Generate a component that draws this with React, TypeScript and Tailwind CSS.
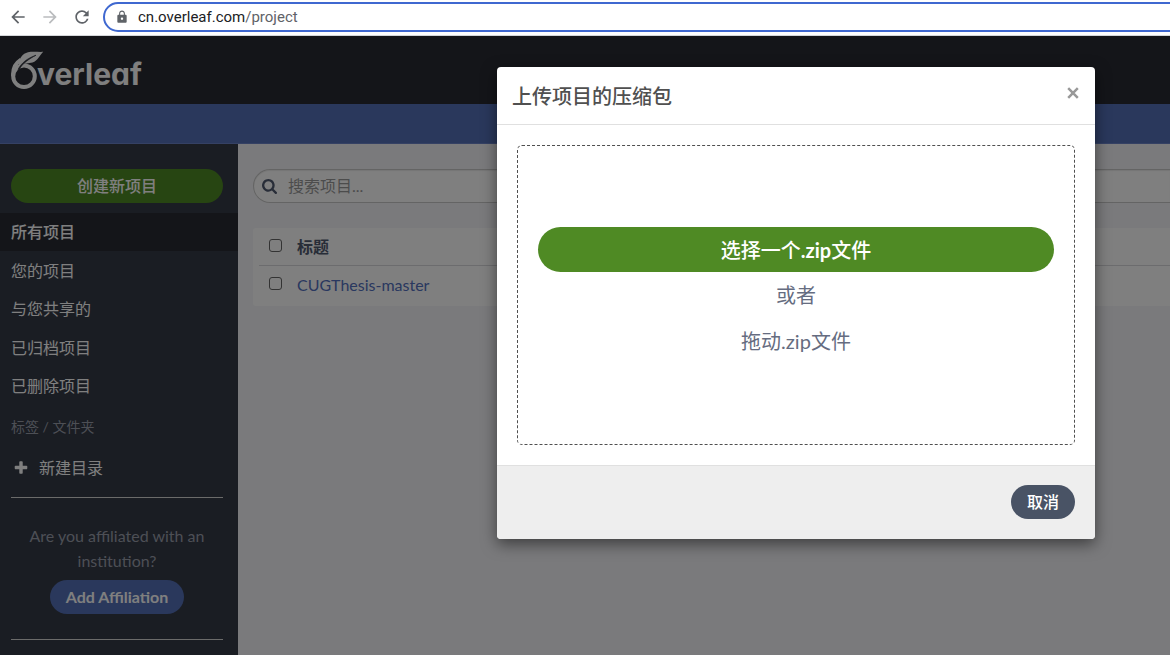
import type { ReactNode } from "react";
import { MdArrowBack, MdArrowForward, MdLock, MdRefresh } from "react-icons/md";

const filters = ["所有项目", "您的项目", "与您共享的", "已归档项目", "已删除项目"];

function Logo() {
  return (
    <a href="#" aria-label="Overleaf" className="flex h-[38px] text-white">
      <svg viewBox="0 0 33 38" className="h-[38px] w-[33px] shrink-0" aria-hidden="true">
        <circle cx="13" cy="25.2" r="10.8" fill="none" stroke="currentColor" strokeWidth="4" />
        <path d="M2.200 25C1.600 17.500 5 12 10 8.800" fill="none" stroke="currentColor" strokeWidth="4" />
        <path
          d="M8 13C8.200 7 11.500 2.600 17 1.200C22 0 27.500 1.200 32.200 .800C28.500 4.500 27 9.800 21.500 11.600C17.500 12.900 14 11.400 8 16Z"
          fill="currentColor"
        />
        <path d="M7 18.500C10 12.500 16 7.200 25 4.200C18 8 11.500 12.500 8.500 18Z" fill="#282c35" stroke="#282c35" strokeWidth="0.600" />
      </svg>
      <span className="-ml-[7px] pt-[5px] font-['Inter',sans-serif] text-[30px] leading-[36px] font-bold [font-feature-settings:'cv11'_1,'ss03'_1]">
        verleaf
      </span>
    </a>
  );
}

function SearchIcon() {
  return (
    <svg viewBox="0 128 1664 1664" className="size-[15px] shrink-0" fill="currentColor" aria-hidden="true">
      <path d="M1152 832q0-185-131.500-316.500t-316.500-131.500-316.500 131.500-131.500 316.500 131.500 316.500 316.500 131.500 316.500-131.500 131.500-316.500zm512 832q0 52-38 90t-90 38q-54 0-90-38l-343-342q-179 124-399 124-143 0-273.500-55.500t-225-150-150-225-55.500-273.500 55.500-273.500 150-225 225-150 273.500-55.500 273.500 55.500 225 150 150 225 55.500 273.500q0 220-124 399l343 343q37 37 37 90z" />
    </svg>
  );
}

function PlusIcon() {
  return (
    <svg viewBox="0 0 1792 1792" className="size-4 shrink-0" fill="currentColor" aria-hidden="true">
      <path d="M1600 736v192q0 40-28 68t-68 28h-416v416q0 40-28 68t-68 28h-192q-40 0-68-28t-28-68v-416h-416q-40 0-68-28t-28-68v-192q0-40 28-68t68-28h416v-416q0-40 28-68t68-28h192q40 0 68 28t28 68v416h416q40 0 68 28t28 68z" />
    </svg>
  );
}

function BrowserBar() {
  return (
    <div className="flex h-9 items-center overflow-hidden border-b border-[#d5d7da] bg-white pb-[2px] pl-2 font-[Roboto,sans-serif] text-[#5f6368]">
      <button type="button" aria-label="Back" className="mr-3 shrink-0">
        <MdArrowBack size={20} />
      </button>
      <button type="button" aria-label="Forward" className="mr-3 shrink-0 text-[#babcbe]">
        <MdArrowForward size={20} />
      </button>
      <button type="button" aria-label="Reload" className="mr-[11px] shrink-0">
        <MdRefresh size={20} />
      </button>
      <div className="-mr-5 flex h-[30px] grow items-center rounded-full border-2 border-[#3f68d0] pl-[10px] text-[15px] leading-5">
        <MdLock size={14} className="mr-[9px]" />
        <span className="text-[#202124]">cn.overleaf.com</span>
        <span>/project</span>
      </div>
    </div>
  );
}

function Sidebar() {
  return (
    <aside className="w-[238px] shrink-0 bg-[#343a47] pt-[25px] text-white">
      <div className="pr-[15px] pl-[11px]">
        <button type="button" className="h-[34px] w-full rounded-full bg-[#4f8a24] font-medium">
          创建新项目
        </button>
      </div>
      <ul className="mt-[10px] flex h-48 flex-col justify-between">
        {filters.map((name, i) => (
          <li key={name}>
            <a
              href="#"
              className={
                i === 0
                  ? "flex h-[38px] items-center bg-[#282b33] pl-[11px] font-medium"
                  : "flex h-[38px] items-center pl-[11px]"
              }
            >
              {name}
            </a>
          </li>
        ))}
      </ul>
      <h2 className="mt-3 pl-[11px] text-[14px] leading-5 text-[#9a9fab]">标签 / 文件夹</h2>
      <button type="button" className="mt-[18px] flex items-center gap-[10px] pl-[13px] leading-[26px]">
        <PlusIcon />
        新建目录
      </button>
      <div className="mt-4 mr-[15px] ml-[11px] border-y border-[#e8e9e4]/90 pt-[25px] pb-[25px] text-center">
        <p className="leading-[25px] text-[#9a9fab]">Are you affiliated with an institution?</p>
        <button type="button" className="mt-[7px] h-[34px] rounded-full bg-[#5470b8] px-4 font-bold">
          Add Affiliation
        </button>
      </div>
    </aside>
  );
}

function Row({ label, children, head }: { label: string; children: ReactNode; head?: boolean }) {
  const Cell = head ? "th" : "td";
  return (
    <tr className={head ? "h-[37px] border-b border-[#d8d9dc]" : "h-[38px]"}>
      <Cell className="w-[38px] pl-[10px] text-left align-middle">
        <input
          type="checkbox"
          aria-label={label}
          className="mb-[2px] block size-[13px] appearance-none rounded-[3px] border border-[#666] bg-white"
        />
      </Cell>
      <Cell className="text-left align-middle leading-[25px]">{children}</Cell>
    </tr>
  );
}

function ProjectList() {
  return (
    <main className="min-w-0 grow bg-[#f4f5f8] pt-[25px] pl-[15px] text-[#505a70]">
      <label className="flex h-[34px] items-center gap-[11px] rounded-l-full border border-r-0 border-[#c8c8c8] bg-white pl-2 shadow-[inset_0_1px_1px_rgba(0,0,0,0.08)]">
        <SearchIcon />
        <input
          type="text"
          aria-label="搜索项目"
          placeholder="搜索项目..."
          className="min-w-0 grow bg-transparent outline-none placeholder:text-[#999]"
        />
      </label>
      <div className="mt-[25px] rounded-l-[3px] bg-white pb-[3px] pl-[6px]">
        <table className="w-full border-collapse">
          <thead>
            <Row head label="选择全部">
              <span className="font-bold">标题</span>
            </Row>
          </thead>
          <tbody>
            <Row label="选择 CUGThesis-master">
              <a href="#" className="text-[#5370c0]">
                CUGThesis-master
              </a>
            </Row>
          </tbody>
        </table>
      </div>
    </main>
  );
}

function UploadDialog() {
  return (
    <section
      role="dialog"
      aria-labelledby="upload-title"
      className="w-[598px] overflow-hidden rounded-[4px] bg-white shadow-[0_5px_15px_rgba(0,0,0,0.5)]"
    >
      <header className="flex h-[58px] items-center justify-between border-b border-[#e0e0e0] pr-[15px] pl-[15px]">
        <h1 id="upload-title" className="text-[20px] leading-[26px] font-medium text-[#505050]">
          上传项目的压缩包
        </h1>
        <button type="button" aria-label="关闭" className="mb-[6px] text-[#999]">
          <svg viewBox="0 0 14 14" className="size-[14px]" aria-hidden="true">
            <path d="M2.200 2.200L11.800 11.800M11.800 2.200L2.200 11.800" stroke="currentColor" strokeWidth="2.500" />
          </svg>
        </button>
      </header>
      <div className="p-5">
        <div className="flex h-[300px] flex-col rounded-[5px] border border-dashed border-[#505050] px-5 pt-[81px] text-center text-[20px] leading-[30px] text-[#656c80]">
          <button type="button" className="h-[45px] w-full rounded-full bg-[#4f8a24] font-medium text-white">
            选择一个<span className="font-bold">.zip</span>文件
          </button>
          <p className="mt-2">或者</p>
          <p className="mt-4">拖动.zip文件</p>
        </div>
      </div>
      <footer className="flex justify-end border-t border-[#e0e0e0] bg-[#eee] px-5 pt-[19px] pb-5">
        <button type="button" className="h-[34px] rounded-full bg-[#495365] px-4 font-medium text-white">
          取消
        </button>
      </footer>
    </section>
  );
}

export default function App() {
  return (
    <div className="flex h-screen flex-col overflow-hidden font-[Lato,'Noto_Sans_CJK_SC',sans-serif] text-[16px]">
      <BrowserBar />
      <div className="relative flex min-h-0 grow flex-col">
        <nav className="h-[68px] shrink-0 bg-[#282b33] pt-[15px] pl-[11px]">
          <Logo />
        </nav>
        <div className="h-10 shrink-0 border-b border-[#6a83c8] bg-[#5470b8]" />
        <div className="flex min-h-0 grow">
          <Sidebar />
          <ProjectList />
        </div>
        <div className="absolute inset-0 flex items-start justify-end bg-black/50 pt-[31px] pr-[75px]">
          <UploadDialog />
        </div>
      </div>
    </div>
  );
}
